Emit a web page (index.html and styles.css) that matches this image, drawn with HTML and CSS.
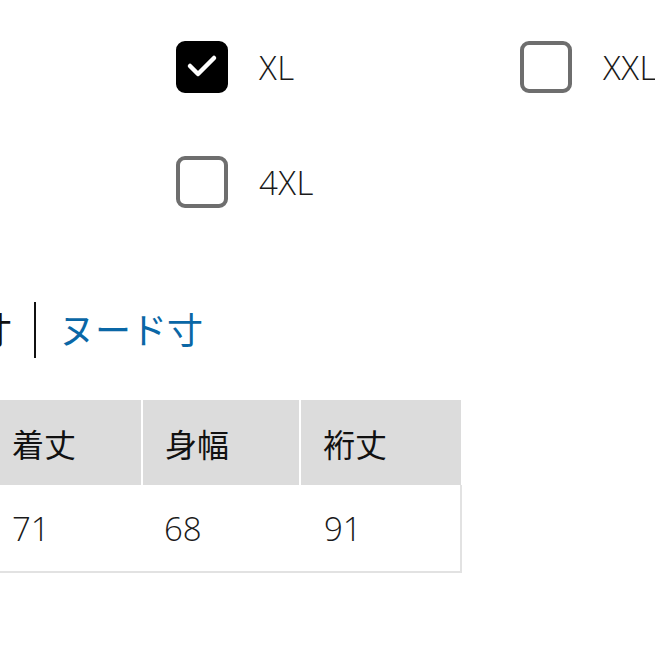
FILE: index.html
```html
<!DOCTYPE html>
<html lang="ja">
<head>
<meta charset="utf-8">
<link rel="stylesheet" href="styles.css">
</head>
<body>
<div class="page">
  <div class="sizes">
    <label class="opt">
      <span class="box checked">
        <svg viewBox="0 0 52 52" width="52" height="52"><path d="M14 25 L22 33 L38 17" fill="none" stroke="#fff" stroke-width="4.5" stroke-linecap="round" stroke-linejoin="round"/></svg>
      </span>
      <span class="lbl">XL</span>
    </label>
    <label class="opt">
      <span class="box"></span>
      <span class="lbl">XXL</span>
    </label>
    <label class="opt">
      <span class="box"></span>
      <span class="lbl">4XL</span>
    </label>
  </div>

  <div class="tabs">
    <span class="tab">寸</span>
    <span class="sep"></span>
    <span class="tab active">ヌード寸</span>
  </div>

  <table class="chart">
    <thead>
      <tr><th class="c1">着丈</th><th class="c2">身幅</th><th class="c3">裄丈</th></tr>
    </thead>
    <tbody>
      <tr><td>71</td><td>68</td><td>91</td></tr>
    </tbody>
  </table>
</div>
</body>
</html>
```

FILE: styles.css
```css
html, body {
  margin: 0;
  padding: 0;
  background: #fff;
}
body {
  width: 655px;
  height: 655px;
  overflow: hidden;
  font-family: "Open Sans", "Noto Sans", "Noto Sans CJK JP", sans-serif;
  color: #1a1a1a;
}
.page {
  padding-top: 41px;
}
.sizes {
  display: grid;
  grid-template-columns: 344px auto;
  row-gap: 63px;
  padding-left: 176px;
  white-space: nowrap;
}
.opt {
  display: flex;
  align-items: center;
  gap: 31px;
}
.box {
  width: 52px;
  height: 52px;
  box-sizing: border-box;
  border: 4px solid #6e6e6e;
  border-radius: 9px;
  flex: none;
  display: block;
}
.box.checked {
  background: #000;
  border-color: #000;
  position: relative;
}
.box.checked svg {
  position: absolute;
  left: -4px;
  top: -4px;
}
.lbl {
  font-family: "Open Sans", "Noto Sans", sans-serif;
  font-size: 33px;
  font-weight: 300;
  letter-spacing: 0.5px;
  color: #1a1a1a;
}
.tabs {
  margin-top: 94px;
  margin-left: -24px;
  display: flex;
  align-items: center;
  height: 56px;
  font-family: "Noto Sans CJK JP", sans-serif;
  font-size: 36px;
}
.tab {
  color: #111;
  line-height: 1;
  padding-bottom: 4px;
}
.tab.active {
  color: #0a67a6;
  margin-left: 23px;
}
.sep {
  width: 2px;
  height: 56px;
  background: #111;
  margin-left: 22px;
}
.chart {
  margin-top: 42px;
  margin-left: -11px;
  border-collapse: collapse;
  font-family: "Noto Sans CJK JP", sans-serif;
  table-layout: fixed;
  width: 472px;
}
.chart th {
  background: #dcdcdc;
  font-weight: 400;
  font-size: 32px;
  text-align: left;
  height: 85px;
  padding: 0 0 0 22px;
  box-sizing: border-box;
  color: #111;
}
.chart th.c1 { width: 153px; padding-left: 23px; }
.chart th.c2 { width: 158px; border-left: 2px solid #fff; }
.chart th.c3 { width: 161px; border-left: 2px solid #fff; }
.chart td {
  font-family: "Open Sans", "Noto Sans", sans-serif;
  font-weight: 300;
  font-size: 33px;
  height: 86px;
  padding: 0 0 0 22px;
  border-bottom: 2px solid #e2e2e2;
  color: #1a1a1a;
}
.chart td:first-child { padding-left: 23px; }
.chart td:last-child { border-right: 2px solid #e2e2e2; padding-left: 24px; }
```
